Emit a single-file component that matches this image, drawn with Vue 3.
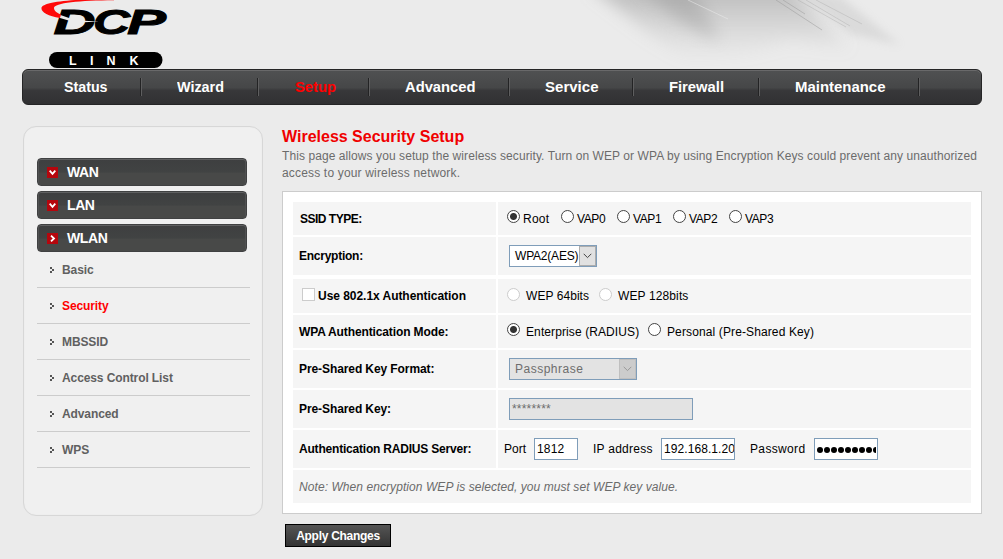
<script setup>
const nav = [
  { t: 'Status', w: 119, f: 43.5 }, { t: 'Wizard', w: 117, f: 47 }, { t: 'Setup', w: 111, f: 41, on: true },
  { t: 'Advanced', w: 140, f: 70.5 }, { t: 'Service', w: 124, f: 53.5 }, { t: 'Firewall', w: 126, f: 55 },
  { t: 'Maintenance', w: 160, f: 90.5 },
]
const groups = [{ t: 'WAN' }, { t: 'LAN' }, { t: 'WLAN', right: true }]
const links = ['Basic', 'Security', 'MBSSID', 'Access Control List', 'Advanced', 'WPS']
const ssids = ['Root', 'VAP0', 'VAP1', 'VAP2', 'VAP3']
</script>

<template>
  <div class="page">
    <svg class="swoosh" width="400" height="69" viewBox="570 0 400 69">
      <defs>
        <filter id="soft" x="-20%" y="-60%" width="140%" height="220%"><feGaussianBlur stdDeviation="8" /></filter>
        <filter id="mid" x="-20%" y="-60%" width="140%" height="220%"><feGaussianBlur stdDeviation="4" /></filter>
        <filter id="fine"><feGaussianBlur stdDeviation="0.7" /></filter>
        <linearGradient id="fade" x1="0" y1="0" x2="0" y2="1">
          <stop offset="0" stop-color="#999" stop-opacity=".65" /><stop offset="1" stop-color="#bbb" stop-opacity="0" />
        </linearGradient>
      </defs>
      <path d="M590-14 H790 L850 48 L790 40 L750 52 L690 62 L650 34Z" fill="url(#fade)" filter="url(#soft)" />
      <path d="M630-20 H690 L720 42 L680 22Z" fill="#888" opacity=".32" filter="url(#soft)" />
      <path d="M800-8 L840-4 L900 45 L850 34Z" fill="#aaa" opacity=".25" filter="url(#mid)" />
      <g stroke="#999" fill="none" filter="url(#fine)">
        <path d="M776 0 L822 30 M783 0 L805 14" opacity=".5" />
        <path d="M798 0 L846 27 M806 0 L850 26 M816 0 L862 24" opacity=".3" />
        <path d="M688 0 L728 19" stroke="#eee" opacity=".5" />
      </g>
    </svg>

    <header class="brand">
      <svg width="140" height="69" viewBox="35 0 140 69">
        <g class="dcp">
          <text x="53.500" y="33.700" textLength="42" lengthAdjust="spacingAndGlyphs">D</text>
          <text x="93" y="33.700" textLength="37" lengthAdjust="spacingAndGlyphs">C</text>
          <text x="127" y="33.700" textLength="39" lengthAdjust="spacingAndGlyphs">P</text>
        </g>
        <path d="M59 14.500 L74 19.800 L72 21.500 L60 18Z M84 20.800 L99 21.500 L84 22.300Z" fill="#ebebeb" />
        <path d="M60 18 C48 16 41 12 41.500 8 C42 3 62-1 114-1 V.300 C80 .500 54 3 54 8 C54 11 57 13 61 14.500Z" fill="#ff0a0a" />
        <rect x="49" y="52" width="113.500" height="16" rx="8" fill="#000" />
        <text class="link" x="69" y="64.500">L</text><text class="link" x="90" y="64.500">I</text>
        <text class="link" x="106.500" y="64.500">N</text><text class="link" x="129.500" y="64.500">K</text>
      </svg>
    </header>

    <nav class="nav">
      <a v-for="n in nav" :key="n.t" :class="{ on: n.on }" :style="{ width: n.w + 'px' }">
        <svg height="20" :width="n.f + 2"><text x="0" y="15" :textLength="n.f" lengthAdjust="spacingAndGlyphs">{{ n.t }}</text></svg>
      </a>
    </nav>

    <div class="body">
      <aside class="side">
        <div v-for="g in groups" :key="g.t" class="group">
          <svg width="11" height="11"><rect width="11" height="11" fill="#b5060d" />
            <path :d="g.right ? 'M4 2.700 L7 5.500 L4 8.300' : 'M2.700 3.700 L5.500 6.800 L8.300 3.700'" stroke="#fff" stroke-width="1.800" fill="none" />
          </svg>
          <span>{{ g.t }}</span>
        </div>
        <a v-for="l in links" :key="l" class="link-row" :class="{ on: l === 'Security' }">
          <svg width="4" height="6" fill="#555" shape-rendering="crispEdges"><path d="M0 0h2v2h-2z M2 2h2v2h-2z M0 4h2v2h-2z" /></svg>
          <span>{{ l }}</span>
        </a>
      </aside>

      <main class="main">
        <h1>Wireless Security Setup</h1>
        <p class="intro"><span class="i1">This page allows you setup the wireless security. Turn on WEP or WPA by using Encryption Keys could prevent any unauthorized</span><br><span class="i2">access to your wireless network.</span></p>
        <section class="panel">
          <div class="row h33">
            <div class="label ssid">SSID TYPE:</div>
            <div class="val radios">
              <label v-for="(s, i) in ssids" :key="s"><i class="radio" :class="{ sel: i === 0 }"></i><span>{{ s }}</span></label>
            </div>
          </div>
          <div class="row h38 last">
            <div class="label encl">Encryption:</div>
            <div class="val"><div class="select enc"><span>WPA2(AES)</span><b><svg width="9" height="6"><path d="M.7.8 L4.500 4.600 L8.300.8" /></svg></b></div></div>
          </div>
          <div class="row h34">
            <div class="label dot1x"><i class="check"></i><span>Use 802.1x Authentication</span></div>
            <div class="val pair off"><i class="radio"></i><span class="w64">WEP 64bits</span><i class="radio"></i><span class="w128">WEP 128bits</span></div>
          </div>
          <div class="row h33">
            <div class="label mode">WPA Authentication Mode:</div>
            <div class="val pair"><i class="radio sel"></i><span class="ent">Enterprise (RADIUS)</span><i class="radio"></i><span class="pers">Personal (Pre-Shared Key)</span></div>
          </div>
          <div class="row h38">
            <div class="label keyl">Pre-Shared Key Format:</div>
            <div class="val"><div class="select fmt"><span>Passphrase</span><b><svg width="9" height="6"><path d="M.7.8 L4.500 4.600 L8.300.8" /></svg></b></div></div>
          </div>
          <div class="row h38">
            <div class="label keyl">Pre-Shared Key:</div>
            <div class="val"><div class="input psk">********</div></div>
          </div>
          <div class="row h38">
            <div class="label serverl">Authentication RADIUS Server:</div>
            <div class="val radius">
              <span class="port">Port</span><div class="input p1">1812</div>
              <span class="ip">IP address</span><div class="input p2"><div class="clip">192.168.1.20</div></div>
              <span class="pw">Password</span>
              <div class="input p3"><div class="clip dots"><i v-for="k in 9" :key="k"></i></div></div>
            </div>
          </div>
          <div class="row h33"><div class="note">Note: When encryption WEP is selected, you must set WEP key value.</div></div>
        </section>
        <button class="apply">Apply Changes</button>
      </main>
    </div>
  </div>
</template>

<style>
html, body { margin: 0; background: #ebebeb; overflow: hidden; }
</style>
<style scoped>
.page { position: relative; width: 1003px; height: 559px; overflow: hidden; background: #ebebeb; font: 12px/16px "Liberation Sans", Arial, sans-serif; color: #000; }
.page *, .page { box-sizing: border-box; }
svg { display: block; flex: none; }
.swoosh { position: absolute; left: 570px; top: 0; }
.brand { height: 69px; padding-left: 35px; }
.dcp { font: italic 900 34.500px "Liberation Sans", Arial, sans-serif; stroke: #000; stroke-width: .9px; }
.link { font: bold 12.500px "Liberation Sans", Arial, sans-serif; fill: #fff; }
.nav { position: relative; display: flex; align-items: center; width: 960px; height: 36px; margin-left: 22px; border: 1px solid #252526; border-radius: 6px; background: linear-gradient(#505152, #464748 52%, #38383a 60%, #303032); box-shadow: inset 0 1px #69696a; }
.nav a { height: 18px; display: flex; align-items: center; padding-left: 35px; border-right: 1px solid #5e5e5f; box-shadow: inset -1px 0 #232324; flex: none; }
.nav a:first-child { padding-left: 41px; }
.nav .on { padding-left: 36px; }
.nav text { font: bold 14px "Liberation Sans", Arial, sans-serif; fill: #fff; }
.nav .on text { fill: #f00; }
.body { display: flex; }
.side { width: 240px; height: 390px; margin: 21px 0 0 23px; padding: 31px 12px 0 13px; border: 1px solid #d7d7d7; border-radius: 13px; background: #f0f0f0; box-shadow: inset 0 0 1px #ddd; }
.group { display: flex; align-items: center; width: 210px; height: 28px; margin-bottom: 5px; padding: 1px 0 0 10px; border-radius: 4px; background: linear-gradient(#3e3f40, #414343 50%, #484948 55%, #484948); border: 1px solid #404142; box-shadow: inset 0 1px #606162, inset 1px 0 #505152, inset -1px 0 #505152; color: #fff; font: bold 14px/16px "Liberation Sans", Arial, sans-serif; letter-spacing: -.4px; }
.group:nth-child(3) { margin-bottom: 0; }
.group svg { margin-left: -1px; }
.group span { margin: 0 0 2px 9px; }
.link-row { display: flex; align-items: center; width: 213px; height: 36px; padding-left: 13px; border-bottom: 1px solid #ccc; font-weight: bold; color: #606060; letter-spacing: -.1px; }
.link-row span { margin-left: 8px; }
.link-row.on { color: #f00; }
.main { width: 700px; margin: 22px 0 0 19px; }
h1 { margin: 0; padding-top: 1px; height: 21px; font: bold 16px/18px "Liberation Sans", Arial, sans-serif; color: #f00000; white-space: nowrap; }
.intro { margin: 0 0 9px; height: 34px; line-height: 17px; color: #6b6b6b; white-space: nowrap; }
.i1 { letter-spacing: .08px; } .i2 { letter-spacing: .17px; }
.panel { height: 323px; padding: 10px; border: 1px solid #ccc; background: #fff; }
.row { display: flex; gap: 2px; margin-bottom: 2px; }
.row > div { display: flex; align-items: center; background: #f5f5f5; white-space: nowrap; }
.row .label { width: 203px; padding-left: 6px; font-weight: bold; flex: none; }
.row .ssid { padding-left: 7px; letter-spacing: -.5px; }
.encl { letter-spacing: -.25px; }
.dot1x { letter-spacing: -.04px; }
.mode { letter-spacing: -.12px; }
.keyl { letter-spacing: -.09px; }
.serverl { letter-spacing: -.2px; }
.row .val { flex: 1; padding-left: 11px; }
.row .note { flex: 1; padding-left: 6px; font-style: italic; color: #6b6b6b; letter-spacing: .07px; }
.h33 { height: 33px; } .h34 { height: 34px; } .h38 { height: 38px; }
.last { margin-bottom: 4px; }
.radio { width: 13px; height: 13px; border: 1px solid #444; border-radius: 50%; background: #fff; flex: none; margin-bottom: 4px; }
.radio.sel { background: radial-gradient(circle, #333 3px, #fff 4px); }
.off .radio { border-color: #ccc; }
.row .radios, .row .pair { padding-left: 9px; }
.radios label { display: flex; align-items: center; width: 56px; letter-spacing: -.4px; }
.radios label:first-child { width: 54px; letter-spacing: .25px; }
.radios label span { margin-left: 3px; }
.pair span { margin-left: 6px; flex: none; }
.pair .w64 { width: 73px; letter-spacing: .06px; }
.w128 { letter-spacing: .12px; }
.pair .ent { width: 122px; letter-spacing: .1px; }
.pers { letter-spacing: .12px; }
.check { width: 13px; height: 13px; margin: 0 3px 4px 3px; border: 1px solid #ccc; background: #fff; }
.select { display: flex; height: 22px; border: 1px solid #7f9db9; background: #fff; line-height: 20px; }
.select span { padding-left: 5px; flex: 1; }
.select b { width: 17px; display: flex; align-items: center; justify-content: center; background: #e1e1e1; border: 1px solid #adadad; }
.select path { fill: none; stroke: #444; }
.enc { width: 88px; letter-spacing: -.2px; }
.fmt { width: 128px; letter-spacing: .5px; }
.select.fmt, .input.psk { background: #e3e3e3; color: #6d6d6d; }
.fmt b { background: #ccc; border-color: #bfbfbf; }
.fmt path { stroke: #999; }
.input { height: 22px; border: 1px solid #7f9db9; background: #fff; padding: 0 2px; line-height: 20px; }
.psk { width: 184px; letter-spacing: .2px; }
.clip { overflow: hidden; height: 20px; }
.dots { display: flex; align-items: center; gap: 1px; }
.row .radius { padding-left: 6px; }
.radius span { flex: none; }
.port { width: 30px; } .p1 { width: 44px; margin-right: 15px; letter-spacing: .2px; }
.ip { width: 68px; letter-spacing: .25px; } .p2 { width: 74px; margin-right: 15px; letter-spacing: .08px; }
.input.p2 { padding-right: 0; }
.pw { width: 64px; letter-spacing: .35px; }
.p3 { width: 64px; }
.input.p3 { padding-right: 1px; }
.dots i { width: 6px; height: 6px; border-radius: 50%; background: #000; flex: none; margin-top: 2px; }
.apply { display: block; width: 106px; height: 23px; margin: 10px 0 0 3px; padding: 0; border: 1px solid #000; background: linear-gradient(#555, #444 50%, #333); color: #fff; font: bold 12px/20px "Liberation Sans", Arial, sans-serif; letter-spacing: -.28px; }
</style>
